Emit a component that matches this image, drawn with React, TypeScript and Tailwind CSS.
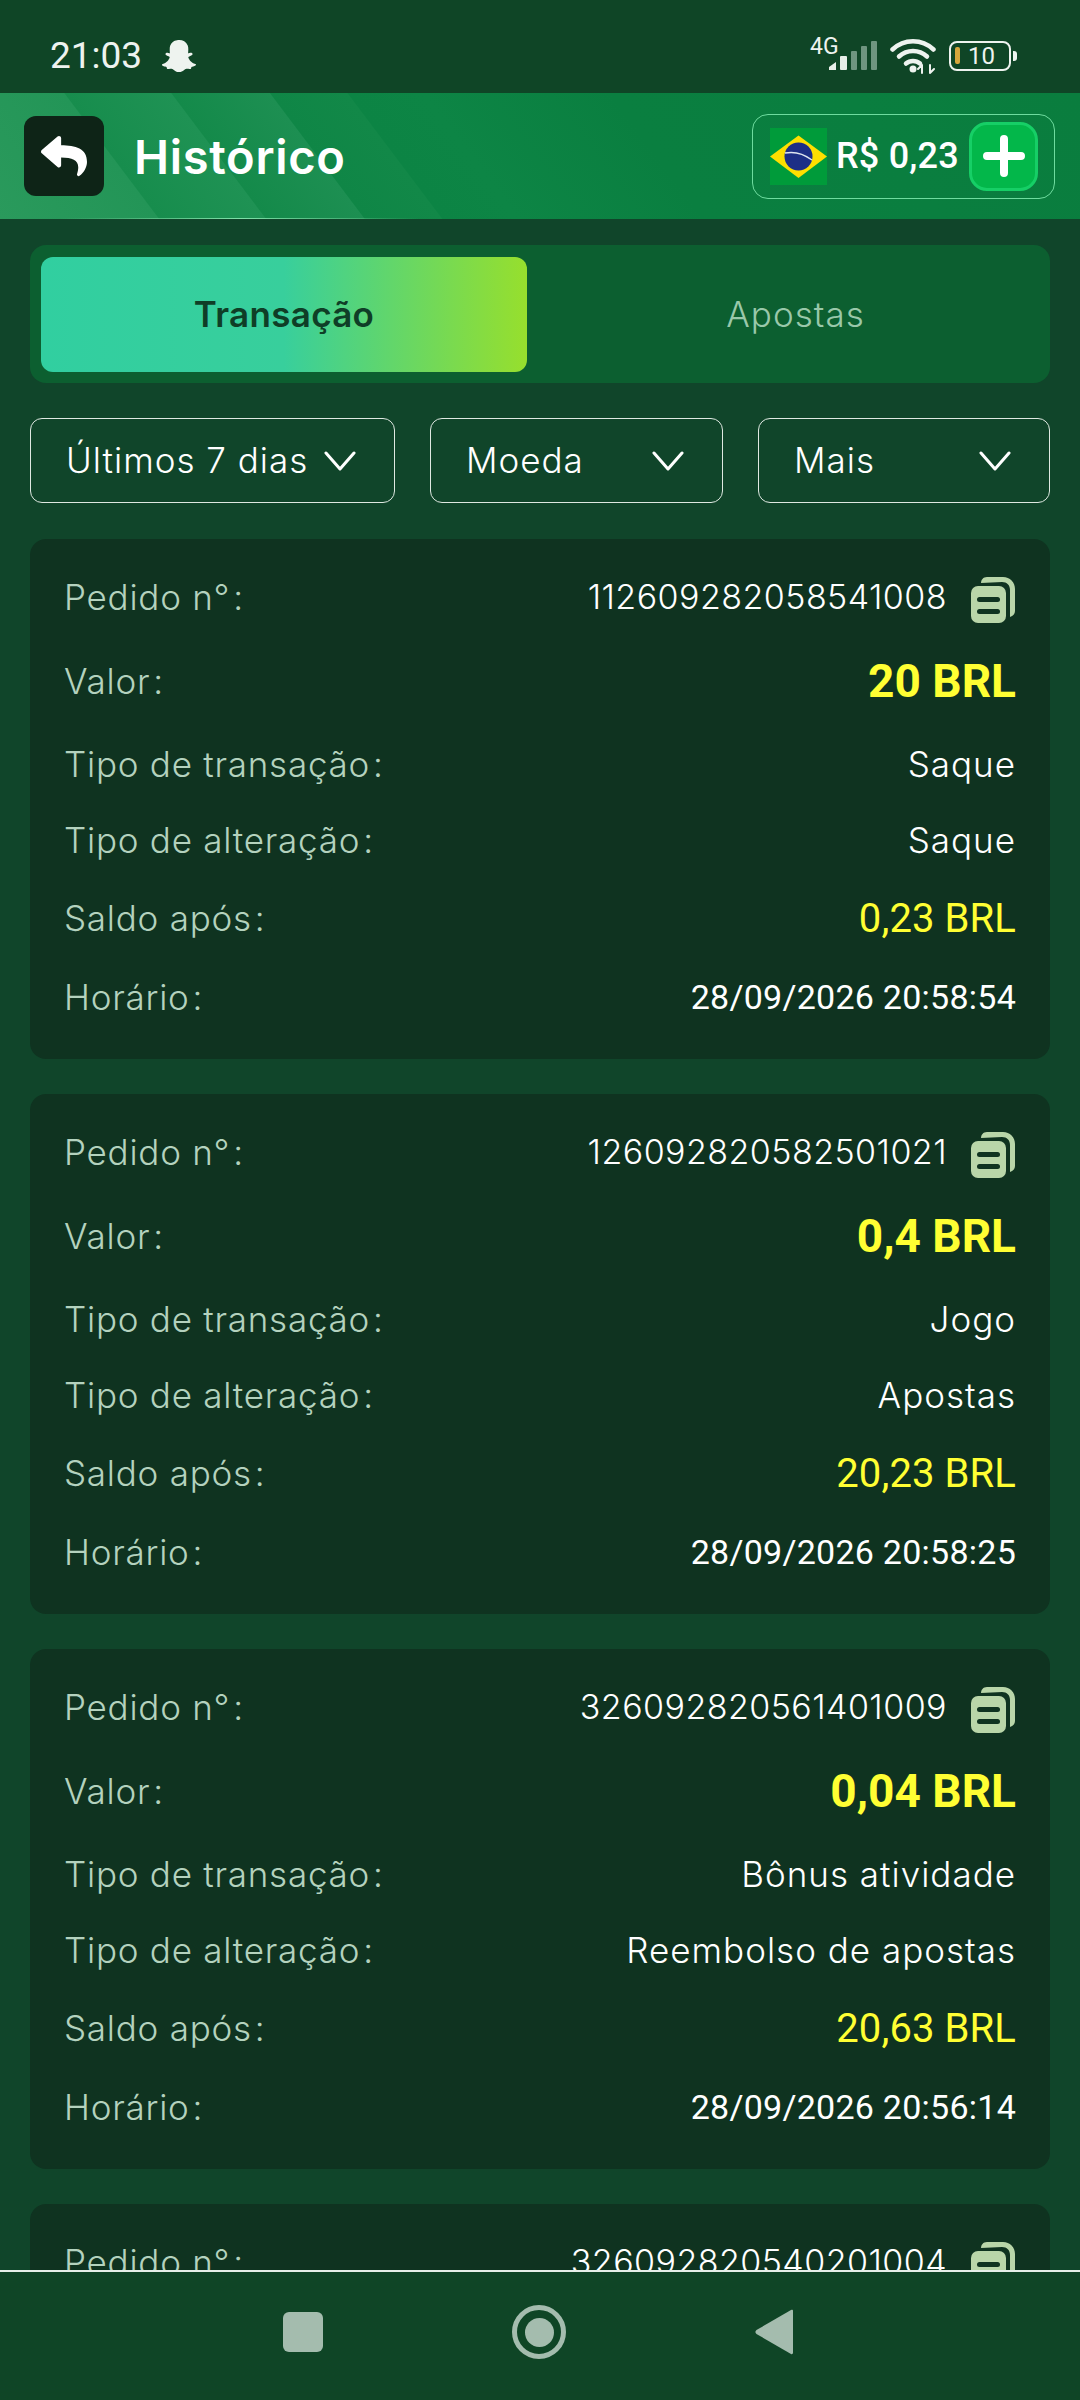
import { FaReply, FaSnapchatGhost } from 'react-icons/fa'

interface Order {
  id: string
  value: string
  type: string
  change: string
  balance: string
  time: string
}

const orders: Order[] = [
  { id: '112609282058541008', value: '20 BRL', type: 'Saque', change: 'Saque', balance: '0,23 BRL', time: '28/09/2026 20:58:54' },
  { id: '126092820582501021', value: '0,4 BRL', type: 'Jogo', change: 'Apostas', balance: '20,23 BRL', time: '28/09/2026 20:58:25' },
  { id: '326092820561401009', value: '0,04 BRL', type: 'Bônus atividade', change: 'Reembolso de apostas', balance: '20,63 BRL', time: '28/09/2026 20:56:14' },
  { id: '326092820540201004', value: '0,04 BRL', type: 'Bônus atividade', change: 'Reembolso de apostas', balance: '20,59 BRL', time: '28/09/2026 20:54:02' },
]

function SignalIcon() {
  return (
    <svg width="48" height="30" viewBox="0 0 48 30" className="absolute left-[16px] top-[2px]">
      <path d="M0 29v-3l7-5v8z" fill="#e8efe9" />
      <rect x="11" y="15" width="7" height="14" rx="1" fill="#e8efe9" />
      <rect x="22" y="10" width="6" height="19" rx="1" fill="#6f9580" />
      <rect x="32" y="5" width="6" height="24" rx="1" fill="#6f9580" />
      <rect x="42" y="0" width="6" height="29" rx="1" fill="#6f9580" />
    </svg>
  )
}

function WifiIcon() {
  return (
    <svg width="46" height="36" viewBox="0 0 46 36" fill="none" stroke="#eef3ef" strokeWidth="4.500" strokeLinecap="round">
      <path d="M2.500 11.500C14 .5 32 .5 43.500 11.500" />
      <path d="M9 18.500c8-7.500 20-7.500 28 0" />
      <path d="M16 25.500c4-3.500 10-3.500 14 0" />
      <circle cx="23" cy="31" r="3.500" fill="#eef3ef" stroke="none" />
      <path d="M32 27v8M28 31l4-4M40 27v8M40 35l4-4" strokeWidth="2" />
    </svg>
  )
}

function CopyIcon() {
  return (
    <svg width="44" height="46" viewBox="0 0 44 46" className="shrink-0">
      <path d="M10 6c0-3 2-6 6-6h16c7 0 12 5 12 12v22c0 3-2 5-5 6V13c0-5-3-8-8-8z" fill="#b9d6a9" />
      <rect x="0" y="9" width="35" height="37" rx="7" fill="#b9d6a9" />
      <rect x="6" y="20" width="23" height="5" rx="2.500" fill="#0f3320" />
      <rect x="6" y="32" width="23" height="5" rx="2.500" fill="#0f3320" />
    </svg>
  )
}

function Flag() {
  return (
    <svg width="57" height="57" viewBox="0 0 57 57" className="shrink-0">
      <rect width="57" height="57" fill="#009b3a" />
      <path d="M28.500 7.500L57 28.500 28.500 50 0 28.500z" fill="#fedf00" />
      <circle cx="28.500" cy="28.500" r="14" fill="#1d2f86" />
      <path d="M15 25c10-2 19 1 27 7" stroke="#dfe6f0" strokeWidth="1.500" fill="none" />
    </svg>
  )
}

function Chevron() {
  return (
    <svg width="32" height="20" viewBox="0 0 32 20" fill="none" stroke="white" strokeWidth="3" strokeLinecap="round" strokeLinejoin="round" className="shrink-0">
      <path d="M2 2l14 16L30 2" />
    </svg>
  )
}

function Row({ label, children, className }: { label: string; children: React.ReactNode; className: string }) {
  return (
    <div className={`flex items-start justify-between ${className}`}>
      <span className="h-[40px] text-[35px] leading-[40px] tracking-[0.75px] font-['Inter',sans-serif] font-light text-[#b4d2be]">
        {label}
        <span className="ml-[3px]">:</span>
      </span>
      {children}
    </div>
  )
}

function OrderCard({ order }: { order: Order }) {
  const textValue = "h-[40px] text-[35px] leading-[40px] tracking-[1px] font-['Inter',sans-serif] font-light text-white"
  return (
    <div className="h-[520px] shrink-0 rounded-[16px] bg-[#0f3320] px-[34px] pt-[38px]">
      <Row label="Pedido n°" className="h-[84px]">
        <div className="mr-[1px] flex items-start gap-[24px]">
          <span className="h-[40px] text-[34px] leading-[40px] tracking-[0.45px] font-['Inter',sans-serif] font-light text-white">{order.id}</span>
          <CopyIcon />
        </div>
      </Row>
      <Row label="Valor" className="h-[83px]">
        <span className="h-[40px] text-[46px] leading-[40px] font-['Roboto',sans-serif] font-bold text-[#ffff33]">{order.value}</span>
      </Row>
      <Row label="Tipo de transação" className="h-[76px]">
        <span className={textValue}>{order.type}</span>
      </Row>
      <Row label="Tipo de alteração" className="h-[78px]">
        <span className={textValue}>{order.change}</span>
      </Row>
      <Row label="Saldo após" className="h-[79px]">
        <span className="mt-[1px] h-[40px] text-[40px] leading-[40px] tracking-[0.1px] font-['Roboto',sans-serif] text-[#ffff33]">{order.balance}</span>
      </Row>
      <Row label="Horário" className="h-[40px]">
        <span className="h-[40px] text-[34px] leading-[40px] tracking-[0.25px] font-['Roboto',sans-serif] text-white">{order.time}</span>
      </Row>
    </div>
  )
}

function Filter({ label, className }: { label: string; className: string }) {
  return (
    <div className={`flex h-[85px] items-center justify-between rounded-[12px] border border-[#dfe9e2] pl-[35px] pr-[38px] ${className}`}>
      <span className="text-[35px] tracking-[1px] font-['Inter',sans-serif] font-light text-white">{label}</span>
      <Chevron />
    </div>
  )
}

export default function App() {
  return (
    <div className="flex h-[2400px] w-[1080px] flex-col overflow-hidden bg-[#10452a]">
      {/* status bar */}
      <div className="flex h-[93px] shrink-0 items-center justify-between bg-[#0f4526] pl-[50px] pr-[63px] pt-[26px] pb-[8px]">
        <div className="flex items-center gap-[20px] text-[#eef3ef]">
          <span className="text-[37px] leading-none font-['Roboto',sans-serif]">21:03</span>
          <FaSnapchatGhost className="size-[34px]" />
        </div>
        <div className="flex items-center gap-[13px]">
          <div className="relative h-[34px] w-[64px]">
            <span className="absolute -left-[3px] -top-[4px] text-[23px] leading-none font-['Roboto',sans-serif] text-[#eef3ef]">4G</span>
            <SignalIcon />
          </div>
          <WifiIcon />
          <div className="flex items-center gap-[2px]">
            <div className="flex h-[30px] w-[62px] items-center gap-[8px] rounded-[8px] border-[2.5px] border-[#eef3ef] pl-[4px]">
              <div className="h-[17px] w-[5px] rounded-[2px] bg-[#d6a63c]" />
              <span className="text-[24px] leading-none font-['Roboto',sans-serif] text-[#eef3ef]">10</span>
            </div>
            <div className="h-[10px] w-[4px] rounded-r-[3px] bg-[#eef3ef]" />
          </div>
        </div>
      </div>

      {/* header */}
      <div className="relative flex h-[126px] shrink-0 items-center justify-between bg-[linear-gradient(53deg,#2a9a5c_0%,#239557_13.5%,#178d4d_13.6%,#1f9254_22.6%,#148a4a_22.7%,#1d8f52_31%,#0f8646_31.1%,#128848_37.6%,#0c8444_37.7%,#0d8545_44%,#0a7f40_60%,#0a7d3e_100%)] pl-[24px] pr-[25px]">
        <div className="flex items-center gap-[30px]">
          <div className="flex size-[80px] items-center justify-center rounded-[12px] bg-[#0e2417]">
            <FaReply className="size-[46px] text-white" />
          </div>
          <h1 className="text-[47px] font-semibold leading-none tracking-[0.7px] font-['Inter',sans-serif] text-white">Histórico</h1>
        </div>
        <div className="flex h-[85px] w-[303px] items-center rounded-[16px] border border-[#6fdc9f] pl-[17px] pr-[16px]">
          <Flag />
          <span className="ml-[9px] flex-1 text-[36px] tracking-[0.2px] font-medium font-['Roboto',sans-serif] text-white">R$ 0,23</span>
          <div className="flex size-[69px] items-center justify-center rounded-[18px] border-[3px] border-[#16cf66] bg-[#03b74a]">
            <svg width="42" height="42" viewBox="0 0 42 42" stroke="white" strokeWidth="8" strokeLinecap="round">
              <path d="M21 4v34M4 21h34" />
            </svg>
          </div>
        </div>
        <div className="absolute bottom-0 left-[60px] h-[1px] w-[360px] bg-[linear-gradient(90deg,transparent,#7fe0a8,transparent)]" />
      </div>

      {/* content */}
      <div className="flex min-h-0 flex-1 flex-col overflow-hidden px-[30px] pt-[26px]">
        <div className="flex h-[138px] shrink-0 items-center rounded-[16px] bg-[#0c5f30] pl-[11px] pr-[10px]">
          <div className="flex h-[115px] w-[486px] items-center justify-center rounded-[12px] bg-[linear-gradient(90deg,#31cfa0_0%,#38cf9c_50%,#97df2d_100%)] text-[35px] tracking-[0.3px] font-semibold font-['Inter',sans-serif] text-[#0f3e27]">
            Transação
          </div>
          <div className="flex flex-1 items-center justify-center pl-[24px] text-[35px] tracking-[1px] font-light font-['Inter',sans-serif] text-[#9ac8aa]">
            Apostas
          </div>
        </div>

        <div className="mt-[35px] flex shrink-0 gap-[35px]">
          <Filter label="Últimos 7 dias" className="w-[365px]" />
          <Filter label="Moeda" className="w-[293px]" />
          <Filter label="Mais" className="w-[292px]" />
        </div>

        <div className="mt-[36px] flex flex-col gap-[35px]">
          {orders.map((order) => (
            <OrderCard key={order.id} order={order} />
          ))}
        </div>
      </div>

      {/* nav bar */}
      <div className="flex h-[130px] shrink-0 items-center justify-center gap-[189px] border-t-2 border-[#e6efe9] bg-[#0f4526] pb-[8px] pr-[4px]">
        <div className="size-[40px] rounded-[6px] bg-[#a4bcae]" />
        <div className="flex size-[54px] items-center justify-center rounded-full border-[5px] border-[#a4bcae]">
          <div className="size-[29px] rounded-full bg-[#a4bcae]" />
        </div>
        <svg width="38" height="46" viewBox="0 0 38 46">
          <path d="M36 1 1.500 21c-1.500 1-1.500 3 0 4L36 45c1 .5 2 0 2-1.500V2c0-1.500-1-1.500-2-1z" fill="#a4bcae" />
        </svg>
      </div>
    </div>
  )
}
